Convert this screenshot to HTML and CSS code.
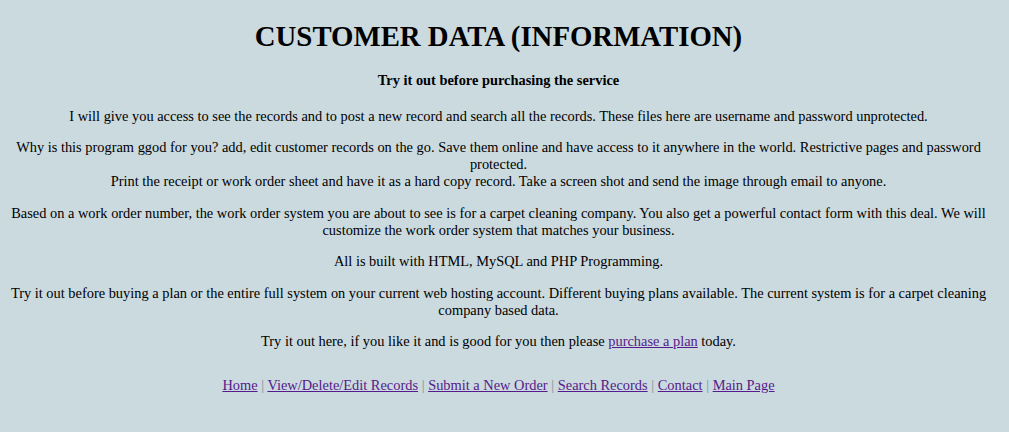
FILE: index.html
```html
<!DOCTYPE html>
<html lang="en">
<head>
    <meta charset="UTF-8">
    <title>Customer Data (Information)</title>
    <link rel="stylesheet" href="styles.css">
</head>
<body>
    <div class="page">
        <h1>CUSTOMER DATA (INFORMATION)</h1>
        <h4>Try it out before purchasing the service</h4>

        <p>I will give you access to see the records and to post a new record and search all the records. These files here are username and password unprotected.</p>

        <p>Why is this program ggod for you? add, edit customer records on the go. Save them online and have access to it anywhere in the world. Restrictive pages and password protected.<br>
        Print the receipt or work order sheet and have it as a hard copy record. Take a screen shot and send the image through email to anyone.</p>

        <p>Based on a work order number, the work order system you are about to see is for a carpet cleaning company. You also get a powerful contact form with this deal. We will customize the work order system that matches your business.</p>

        <p>All is built with HTML, MySQL and PHP Programming.</p>

        <p>Try it out before buying a plan or the entire full system on your current web hosting account. Different buying plans available. The current system is for a carpet cleaning company based data.</p>

        <p>Try it out here, if you like it and is good for you then please <a href="#">purchase a plan</a> today.</p>

        <!-- footer menu -->
        <div class="menu">
            <a href="#">Home</a> <span class="sep">|</span>
            <a href="#">View/Delete/Edit Records</a> <span class="sep">|</span>
            <a href="#">Submit a New Order</a> <span class="sep">|</span>
            <a href="#">Search Records</a> <span class="sep">|</span>
            <a href="#">Contact</a> <span class="sep">|</span>
            <a href="#">Main Page</a>
        </div>
    </div>
</body>
</html>
```

FILE: styles.css
```css
body {
    font-family: "Liberation Serif", "Times New Roman", serif;
    font-size: 14.4px;
    line-height: 17px;
    background-color: #cbdadf;
    color: #000;
    margin: 7px 19px 7px 7px;
}

.page {
    text-align: center;
}

h1 {
    font-size: 28.8px;
    line-height: 33px;
    margin: 13px 0 19px;
}

h4 {
    font-size: 14.4px;
    margin: 19px 0;
}

p {
    margin: 14.4px 0;
}

a {
    color: #551a8b;
}

.menu {
    margin-top: 27px;
}

.sep {
    color: #7f8f99;
}
```
